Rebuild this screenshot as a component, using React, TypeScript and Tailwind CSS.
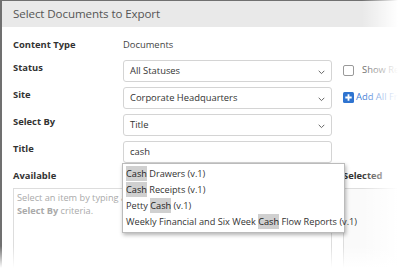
import React from "react";

const font = { fontFamily: '"Open Sans", "Liberation Sans", sans-serif' };

function Chevron() {
  return (
    <svg width="7" height="5" viewBox="0 0 7 5" className="absolute right-[6px] top-[9px]">
      <path d="M0.7 0.8 L3.5 3.6 L6.3 0.8" fill="none" stroke="#666" strokeWidth="1" />
    </svg>
  );
}

function Select({ value }: { value: string }) {
  return (
    <div className="relative h-[22px] w-[209px] shrink-0 whitespace-nowrap rounded-[3px] border border-[#d4d4d4] bg-white pl-[6px] text-[9.4px] leading-[20px] text-[#333]">
      {value}
      <Chevron />
    </div>
  );
}

function Hl({ children }: { children: React.ReactNode }) {
  return <span className="bg-[#d0d0d0] py-[1px] text-[#222]">{children}</span>;
}

const label = "w-[110px] shrink-0 pt-[2px] text-[9.4px] font-bold leading-[12px] text-[#333]";

export default function App() {
  return (
    <div className="relative h-[268px] w-[398px] overflow-hidden bg-white" style={font}>
      <div className="flex h-full w-full border-l-[2px] border-t border-[#707070] bg-[#707070]">
        <div className="flex h-full w-full flex-col overflow-hidden bg-white">
          <div className="flex h-[26px] shrink-0 items-center whitespace-nowrap bg-[#e9e9e9] pl-[11px] text-[11.6px] tracking-[-0.1px] text-[#555]">
            Select Documents to Export
          </div>
          <div className="flex shrink-0 flex-col whitespace-nowrap pl-[11px] pt-[10px]">
            <div className="flex h-[17px] shrink-0 items-center">
              <div className="w-[110px] shrink-0 text-[9.4px] font-bold text-[#333]">Content Type</div>
              <div className="text-[9.4px] text-[#444]">Documents</div>
            </div>
            <div className="mt-[6px] flex h-[22px] shrink-0">
              <div className={label}>Status</div>
              <Select value="All Statuses" />
              <div className="ml-[11px] flex shrink-0 items-center gap-[8px] pb-[1px]">
                <div className="h-[11px] w-[11px] shrink-0 rounded-[2px] border border-[#999] bg-white" />
                <span className="text-[9.4px] text-[#666]">Show Related</span>
              </div>
            </div>
            <div className="mt-[5px] flex h-[22px] shrink-0">
              <div className={label}>Site</div>
              <Select value="Corporate Headquarters" />
              <div className="ml-[11px] flex shrink-0 items-center gap-[2px] pb-[2px]">
                <svg width="11" height="11" viewBox="0 0 11 11" className="shrink-0">
                  <rect width="11" height="11" rx="1.5" fill="#2f74d0" />
                  <path d="M5.5 2.3 V8.7 M2.3 5.5 H8.7" stroke="#fff" strokeWidth="1.8" />
                </svg>
                <span className="text-[9.4px] text-[#3b7bd6]">Add All From Site</span>
              </div>
            </div>
            <div className="mt-[5px] flex h-[22px] shrink-0">
              <div className={label}>Select By</div>
              <Select value="Title" />
            </div>
            <div className="relative mt-[5px] flex h-[22px] shrink-0">
              <div className={label}>Title</div>
              <div className="h-[22px] w-[209px] shrink-0 rounded-[3px] border border-[#d4d4d4] bg-white pl-[6px] text-[9.4px] leading-[20px] text-[#333]">
                cash
              </div>
              <div className="absolute left-[109px] top-[22px] z-10 flex w-[223px] flex-col border border-[#bbb] bg-white pb-[2px] pl-[3px] pt-[2px] text-[9.2px] leading-[16px] text-[#333] shadow-[1px_2px_4px_rgba(0,0,0,0.3)]">
                <div><Hl>Cash</Hl> Drawers (v.1)</div>
                <div><Hl>Cash</Hl> Receipts (v.1)</div>
                <div>Petty <Hl>Cash</Hl> (v.1)</div>
                <div>Weekly Financial and Six Week <Hl>Cash</Hl> Flow Reports (v.1)</div>
              </div>
            </div>
            <div className="mt-[6px] flex h-[14px] shrink-0 items-center">
              <div className="w-[330px] shrink-0 text-[9.4px] font-bold text-[#333]">Available</div>
              <div className="text-[9.4px] font-bold text-[#333]">Selected</div>
            </div>
            <div className="mt-[5px] flex shrink-0">
              <div className="h-[90px] w-[319px] shrink-0 overflow-hidden border border-[#ddd] px-[3px] pt-[3px] text-[9.2px] leading-[12.5px] text-[#aaa]">
                Select an item by typing a title in the box above, or change the
                <br />
                <span className="font-bold">Select By</span> criteria.
              </div>
              <div className="ml-[11px] h-[90px] w-[60px] shrink-0 border border-[#ddd] bg-[#fafafa]" />
            </div>
          </div>
        </div>
      </div>
      <div className="pointer-events-none absolute right-0 top-0 z-20 h-full w-[36px] bg-gradient-to-r from-transparent to-white" />
      <div className="pointer-events-none absolute bottom-0 left-0 z-20 h-[22px] w-full bg-gradient-to-b from-transparent to-white" />
    </div>
  );
}
